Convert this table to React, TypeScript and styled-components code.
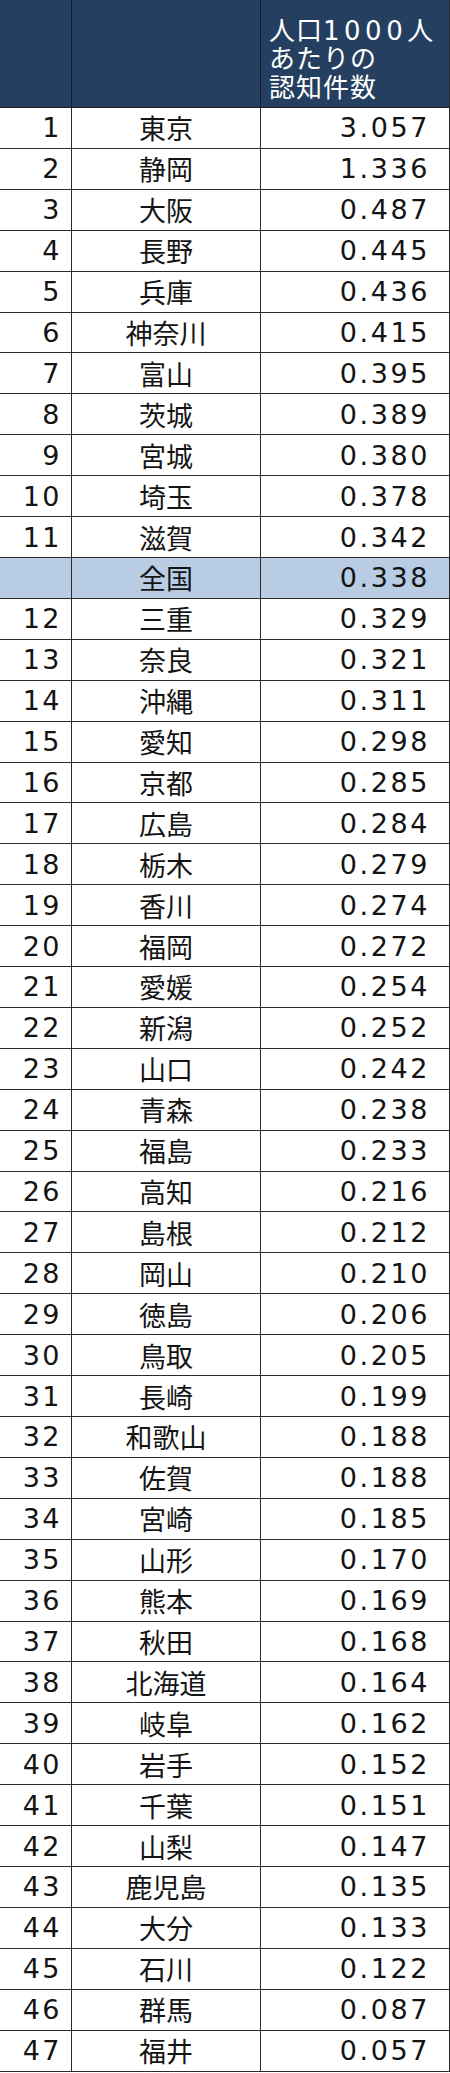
import React from "react";
import styled, { createGlobalStyle } from "styled-components";

const data: [string, string, string][] = [
  ["1", "東京", "3.057"],
  ["2", "静岡", "1.336"],
  ["3", "大阪", "0.487"],
  ["4", "長野", "0.445"],
  ["5", "兵庫", "0.436"],
  ["6", "神奈川", "0.415"],
  ["7", "富山", "0.395"],
  ["8", "茨城", "0.389"],
  ["9", "宮城", "0.380"],
  ["10", "埼玉", "0.378"],
  ["11", "滋賀", "0.342"],
  ["", "全国", "0.338"],
  ["12", "三重", "0.329"],
  ["13", "奈良", "0.321"],
  ["14", "沖縄", "0.311"],
  ["15", "愛知", "0.298"],
  ["16", "京都", "0.285"],
  ["17", "広島", "0.284"],
  ["18", "栃木", "0.279"],
  ["19", "香川", "0.274"],
  ["20", "福岡", "0.272"],
  ["21", "愛媛", "0.254"],
  ["22", "新潟", "0.252"],
  ["23", "山口", "0.242"],
  ["24", "青森", "0.238"],
  ["25", "福島", "0.233"],
  ["26", "高知", "0.216"],
  ["27", "島根", "0.212"],
  ["28", "岡山", "0.210"],
  ["29", "徳島", "0.206"],
  ["30", "鳥取", "0.205"],
  ["31", "長崎", "0.199"],
  ["32", "和歌山", "0.188"],
  ["33", "佐賀", "0.188"],
  ["34", "宮崎", "0.185"],
  ["35", "山形", "0.170"],
  ["36", "熊本", "0.169"],
  ["37", "秋田", "0.168"],
  ["38", "北海道", "0.164"],
  ["39", "岐阜", "0.162"],
  ["40", "岩手", "0.152"],
  ["41", "千葉", "0.151"],
  ["42", "山梨", "0.147"],
  ["43", "鹿児島", "0.135"],
  ["44", "大分", "0.133"],
  ["45", "石川", "0.122"],
  ["46", "群馬", "0.087"],
  ["47", "福井", "0.057"],
];

const GlobalStyle = createGlobalStyle`
  html, body {
    margin: 0;
    padding: 0;
    background: #ffffff;
  }
  body {
    font-family: "DejaVu Sans", "Noto Sans CJK JP", sans-serif;
  }
`;

const Table = styled.div`
  width: 450px;
  border-right: 1px solid #2a2a2a;
  box-sizing: border-box;
`;

const HeaderRow = styled.div`
  display: grid;
  grid-template-columns: 72px 189px 1fr;
  height: 108px;
  background: #243f60;
  border-bottom: 1px solid #1a1a1a;
  box-sizing: border-box;
`;

const HeaderCell = styled.div`
  border-right: 1px solid #111a26;
  &:last-child {
    border-right: none;
  }
`;

const HeaderTitle = styled.div`
  display: flex;
  flex-direction: column;
  justify-content: flex-end;
  padding: 0 0 5px 8px;
  color: #ffffff;
  font-size: 26px;
  line-height: 28.5px;
  letter-spacing: 1px;
`;

const Digits = styled.span`
  letter-spacing: 4.5px;
`;

const Row = styled.div<{ $highlight?: boolean }>`
  display: grid;
  grid-template-columns: 72px 189px 1fr;
  height: 40.92px;
  background: ${(p) => (p.$highlight ? "#b8cce4" : "#ffffff")};
  border-bottom: 1px solid #2a2a2a;
  box-sizing: border-box;
  color: #141414;
  font-size: 27px;
`;

const Cell = styled.div<{ $align: "left" | "center" | "right" }>`
  display: flex;
  align-items: center;
  justify-content: ${(p) =>
    p.$align === "right" ? "flex-end" : p.$align === "center" ? "center" : "flex-start"};
  border-right: 1px solid #2a2a2a;
  &:last-child {
    border-right: none;
  }
`;

const Rank = styled(Cell)`
  padding-right: 9px;
  letter-spacing: 2.5px;
`;

const Pref = styled(Cell)`
  letter-spacing: 0;
`;

const Value = styled(Cell)`
  padding-right: 19px;
  letter-spacing: 2.6px;
`;

export default function App() {
  return (
    <>
      <GlobalStyle />
      <Table>
        <HeaderRow>
          <HeaderCell />
          <HeaderCell />
          <HeaderTitle>
            <div>
              人口<Digits>1000</Digits>人
            </div>
            <div>あたりの</div>
            <div>認知件数</div>
          </HeaderTitle>
        </HeaderRow>
        {data.map(([rank, pref, value]) => (
          <Row key={pref} $highlight={rank === ""}>
            <Rank $align="right">{rank}</Rank>
            <Pref $align="center">{pref}</Pref>
            <Value $align="right">{value}</Value>
          </Row>
        ))}
      </Table>
    </>
  );
}
